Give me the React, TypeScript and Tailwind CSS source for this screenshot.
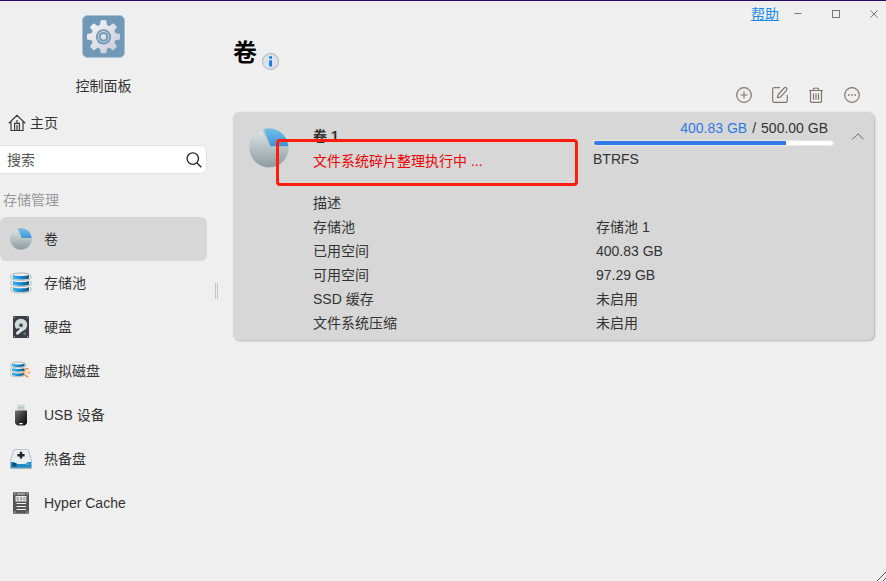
import type { ReactNode } from "react";

function GearIcon() {
  return (
    <svg width="43" height="43" viewBox="0 0 43 43" aria-hidden="true">
      <defs>
        <linearGradient id="gear" x1="0" y1="0" x2="1" y2="1">
          <stop offset="0" stopColor="#fafafc" />
          <stop offset="1" stopColor="#c4c8d6" />
        </linearGradient>
        <mask id="gearShape">
          <g fill="#fff">
            <circle cx="21.5" cy="21.8" r="12.3" />
            {[0, 45, 90, 135].map((angle) => (
              <path
                key={angle}
                d="M18.800 5.300h5.400l1 6v21l-1 6h-5.400l-1-6v-21z"
                transform={`rotate(${angle} 21.5 21.8)`}
              />
            ))}
          </g>
          <circle cx="21.5" cy="21.8" r="7.6" />
          <circle cx="21.5" cy="21.8" r="5.700" fill="#fff" />
          <circle cx="21.5" cy="21.8" r="4.900" />
          <circle cx="21.5" cy="21.8" r="2.800" fill="#fff" />
        </mask>
      </defs>
      <rect x="0.5" y="0.5" width="42" height="42" rx="5" fill="#7298b8" stroke="#a9bfd2" />
      <rect x="4" y="4" width="35" height="35" fill="url(#gear)" mask="url(#gearShape)" />
    </svg>
  );
}

function HomeIcon() {
  return (
    <svg width="18" height="18" viewBox="0 0 18 18" fill="none" stroke="#3c3c3c" strokeWidth="1.2" aria-hidden="true">
      <path d="M0.8 9.2L9 1.4l8.2 7.8M3 7.6v8.9h12V7.6M6.6 16.5V9.3h4.8v7.2M9 6v3.3M9 11v5.5" />
    </svg>
  );
}

function PieIcon({ size, id }: { size: number; id: string }) {
  return (
    <svg width={size} height={size} viewBox="0 0 40 40" className="shrink-0" aria-hidden="true">
      <defs>
        <linearGradient id={id + "g"} x1="0" y1="0" x2="0" y2="1">
          <stop offset="0" stopColor="#dce6e7" />
          <stop offset="1" stopColor="#8e9b9f" />
        </linearGradient>
        <linearGradient id={id + "b"} x1="0" y1="0" x2="0" y2="1">
          <stop offset="0" stopColor="#70c0ea" />
          <stop offset="1" stopColor="#3f93d5" />
        </linearGradient>
      </defs>
      <circle cx="20" cy="20" r="19.7" fill="#bcc7ca" />
      <path d="M20.5 19.8L13.3 1.8A19.3 19.3 0 1 0 39.3 19.8z" fill={`url(#${id}g)`} />
      <path d="M21.5 18.3L15 1.2a19.3 19.3 0 0 1 24.3 17.1z" fill={`url(#${id}b)`} />
    </svg>
  );
}

function PoolIcon() {
  return (
    <svg width="22" height="22" viewBox="0 0 22 22" aria-hidden="true">
      <defs>
        <linearGradient id="pool" x1="0" y1="0" x2="1" y2="0">
          <stop offset="0" stopColor="#35b4f0" />
          <stop offset="0.4" stopColor="#1b95dc" />
          <stop offset="1" stopColor="#0c5786" />
        </linearGradient>
      </defs>
      <path d="M2.500 2.500C5 .5 17 .5 19.500 2.500" fill="none" stroke="#aaa9ad" />
      <path d="M3 3c4 1.300 12 1.300 16 0v3.400c-4 1.500-12 1.500-16 0z" fill="url(#pool)" />
      <path d="M3 9c4 1.600 12 1.600 16 0v3.700c-4 1.500-12 1.500-16 0z" fill="url(#pool)" />
      <path d="M3 15.200c4 1.600 12 1.600 16 0v3.700c-4 1.500-12 1.500-16 0z" fill="url(#pool)" />
      <path
        d="M1.800 2.500C.4 4 .4 6 1.800 7c3.500 1.700 14.900 1.700 18.400 0 1.400-1 1.400-3 0-4.500M1.800 8.700c-1.400 1.300-1.400 3.300 0 4.500 3.500 1.700 14.900 1.700 18.400 0 1.400-1.200 1.400-3.200 0-4.500M1.800 15c-1.400 1.300-1.400 3.300 0 4.500 3.500 1.900 14.900 1.900 18.400 0 1.400-1.200 1.400-3.200 0-4.500"
        fill="none"
        stroke="#b3aeae"
        strokeWidth="0.900"
      />
    </svg>
  );
}

function DiskIcon() {
  return (
    <svg width="22" height="22" viewBox="0 0 22 22" aria-hidden="true">
      <rect x="3" y="0" width="16" height="22" rx="1" fill="#3b3c46" />
      <g fill="#a5a7ad">
        <circle cx="4.500" cy="1.500" r="0.700" />
        <circle cx="17.500" cy="1.500" r="0.700" />
        <circle cx="4.500" cy="20.500" r="0.700" />
        <circle cx="17.500" cy="20.500" r="0.700" />
      </g>
      <circle cx="11" cy="9" r="6.200" fill="#cfdbdb" />
      <path d="M4.500 14.500l5-1.500" stroke="#3b3c46" strokeWidth="2" />
      <path d="M7.500 17.200l4.500-3.700" stroke="#dce6e5" strokeWidth="3" strokeLinecap="round" />
      <path d="M9.800 18.500l4.500-4" stroke="#3b3c46" strokeWidth="0.900" />
      <circle cx="11" cy="9.300" r="2.200" fill="#8b9a9c" />
      <circle cx="11" cy="9.300" r="1.400" fill="#2f3a40" />
      <rect x="13.500" y="16.500" width="2.500" height="2.500" fill="#4e8272" />
    </svg>
  );
}

function VirtualDiskIcon() {
  return (
    <svg width="22" height="22" viewBox="0 0 22 22" aria-hidden="true">
      <path d="M2 3.500C4 1.500 13 1.500 15 3.500" fill="none" stroke="#a6a6ac" strokeWidth="0.800" />
      <path d="M2 3.700c3 1 9.500 1 12.500 0v2.500c-3 1.100-9.500 1.100-12.500 0zM2 8.300c3 1 9.500 1 12.500 0v2.500c-3 1.100-9.500 1.100-12.500 0zM2 12.800c3 1 9.500 1 12.500 0v2.500c-3 1.100-9.500 1.100-12.500 0z" fill="url(#pool)" />
      <path
        d="M1.200 3.500c-1 1-1 2.500 0 3.200 2.500 1.300 11.600 1.300 14.100 0 1-.7 1-2.200 0-3.200M1.200 8.100c-1 1-1 2.500 0 3.200 2.500 1.300 11.600 1.300 14.100 0M1.200 12.600c-1 1-1 2.500 0 3.200 2.500 1.300 9.600 1.300 12.800 0"
        fill="none"
        stroke="#b3aeae"
        strokeWidth="0.800"
      />
      <path d="M18.500 7.800L12.200 12.300l6.300 5z" fill="#efefef" />
      <path d="M18.500 8.700h-2l-3.300 3.900 3.300 3.900h2" fill="none" stroke="#f0923c" strokeWidth="1.400" />
      <path d="M16 12.600h5M19 10.500v4.200" stroke="#f7b679" strokeWidth="1" />
    </svg>
  );
}

function UsbIcon() {
  return (
    <svg width="22" height="22" viewBox="0 0 22 22" aria-hidden="true">
      <defs>
        <linearGradient id="usb" x1="0" y1="0" x2="1" y2="1">
          <stop offset="0" stopColor="#777" />
          <stop offset="0.600" stopColor="#2c2c2c" />
          <stop offset="1" stopColor="#050505" />
        </linearGradient>
      </defs>
      <rect x="7" y="0.500" width="8" height="7" rx="1" fill="#d0dade" />
      <path d="M8.700 3h1.600v1.500H8.700zM11.700 3h1.600v1.500h-1.600z" fill="#9eabb2" />
      <path d="M5 6.500h12v12c0 1.500-2 3-3 3H8c-1 0-3-1.500-3-3z" fill="url(#usb)" />
      <rect x="9.200" y="19" width="3.600" height="1.200" rx="0.500" fill="#fff" />
    </svg>
  );
}

function SpareIcon() {
  return (
    <svg width="22" height="22" viewBox="0 0 22 22" aria-hidden="true">
      <path d="M5 1.500h12l1.500 1L21.600 13v7.500H.4V13L3.500 2.500z" fill="#e9eef0" stroke="#a5b6be" strokeWidth="0.800" />
      <path d="M.8 14h3.700c.8 1.500 2 2 3.500 2h6c1.500 0 2.700-.5 3.500-2h3.700v6H.8z" fill="#1f8bc6" />
      <path d="M.8 20h20.400" stroke="#8aa8b5" />
      <rect x="2.500" y="15" width="4" height="3.500" fill="#0c4b70" />
      <path d="M15.500 16h4" stroke="#63c3ee" />
      <path d="M11 3.800v6.800M7.400 7.200h7.200" stroke="#23252e" strokeWidth="2.400" />
    </svg>
  );
}

function CacheIcon() {
  return (
    <svg width="22" height="22" viewBox="0 0 22 22" aria-hidden="true">
      <rect x="3" y="0.300" width="16" height="21.500" rx="0.800" fill="#555" />
      <rect x="5.500" y="4" width="11" height="5.500" fill="#e8e8e8" />
      <path d="M8.500 5.500H6.800v1.200h1.700V8H6.500M12 5.500h-1.700v1.200H12V8h-2M13.800 5.500h1.500L16 6.800 15.300 8h-1.500z" fill="none" stroke="#777" strokeWidth="0.600" />
      <path d="M6.500 11.500h9.500M6.500 14.500h9.500M6.500 17.500h9.500" stroke="#ededed" />
      <path d="M4 2h1.500M16.500 2H18M4 20h1.500M16.500 20H18M7 2h8" stroke="#ddd" />
    </svg>
  );
}

function IconButton({ label, children }: { label: string; children: ReactNode }) {
  return (
    <button type="button" aria-label={label} className="flex h-6 w-6 items-center justify-center">
      <svg width="18" height="18" viewBox="0 0 18 18" fill="none" stroke="#7d7872" strokeWidth="1.200">
        {children}
      </svg>
    </button>
  );
}

const navItems = [
  { name: "卷", icon: <PieIcon size={22} id="nav" />, active: true },
  { name: "存储池", icon: <PoolIcon /> },
  { name: "硬盘", icon: <DiskIcon /> },
  { name: "虚拟磁盘", icon: <VirtualDiskIcon /> },
  { name: "USB 设备", icon: <UsbIcon /> },
  { name: "热备盘", icon: <SpareIcon /> },
  { name: "Hyper Cache", icon: <CacheIcon /> },
];

const details = [
  ["描述", ""],
  ["存储池", "存储池 1"],
  ["已用空间", "400.83 GB"],
  ["可用空间", "97.29 GB"],
  ["SSD 缓存", "未启用"],
  ["文件系统压缩", "未启用"],
];

const used = 400.83;
const total = 500;

function Sidebar() {
  return (
    <aside className="w-[207px] shrink-0">
      <div className="flex flex-col items-center pt-3.5">
        <GearIcon />
        <span className="mt-4 leading-6">控制面板</span>
      </div>
      <a href="#home" className="mt-[13px] flex items-center gap-1 pl-2 leading-6">
        <HomeIcon />
        主页
      </a>
      <div className="mt-2.5 flex h-[29px] items-center rounded-r-md border border-l-0 border-[#e4e4e4] bg-white pr-1">
        <input
          type="text"
          aria-label="搜索"
          placeholder="搜索"
          className="min-w-0 flex-1 bg-transparent pl-[7px] outline-none placeholder:text-[#555]"
        />
        <button type="button" aria-label="搜索" className="flex h-4 w-4 items-center justify-center">
          <svg width="16" height="16" viewBox="0 0 16 16" fill="none" stroke="#222" strokeWidth="1.300">
            <circle cx="6.800" cy="6.600" r="5.700" />
            <path d="M10.800 10.800l4.500 4.400" />
          </svg>
        </button>
      </div>
      <h2 className="mt-3.5 pl-[3px] leading-6 text-[#999]">存储管理</h2>
      <nav className="mt-[5px] flex flex-col">
        {navItems.map((item) => (
          <a
            key={item.name}
            href="#nav"
            className={
              item.active
                ? "flex h-11 items-center gap-3 rounded-md bg-[#d7d7d7] pl-2.5"
                : "flex h-11 items-center gap-3 pl-2.5"
            }
          >
            {item.icon}
            {item.name}
          </a>
        ))}
      </nav>
    </aside>
  );
}

function WindowBar() {
  return (
    <div className="flex h-[26px] items-center justify-end">
      <a href="#help" className="mr-[7px] text-[#1a8cf0] underline">
        帮助
      </a>
      <div className="flex gap-3.5">
        <button type="button" aria-label="最小化" className="flex h-6 w-6 items-center justify-center">
          <svg width="8" height="8" viewBox="0 0 8 8" stroke="#777">
            <path d="M0.500 3.500h7" />
          </svg>
        </button>
        <button type="button" aria-label="最大化" className="flex h-6 w-6 items-center justify-center">
          <svg width="8" height="8" viewBox="0 0 8 8" fill="none" stroke="#777">
            <rect x="0.500" y="0.500" width="7" height="7" />
          </svg>
        </button>
        <button type="button" aria-label="关闭" className="flex h-6 w-6 items-center justify-center">
          <svg width="8" height="8" viewBox="0 0 8 8" stroke="#777">
            <path d="M0.500 0.500l7 7M7.500 0.500l-7 7" />
          </svg>
        </button>
      </div>
    </div>
  );
}

function VolumeCard() {
  return (
    <section className="relative rounded-md bg-[#d7d7d7] pt-1 pb-[5px] shadow-[1px_1px_2px_#b4b4b4]">
      <div className="flex">
        <div className="w-20 shrink-0 pt-3 pl-4">
          <PieIcon size={40} id="card" />
        </div>
        <div className="flex-1 pt-2">
          <h3 className="leading-6 font-bold">卷 1</h3>
          <p className="mt-px leading-6 text-[#f00000]">文件系统碎片整理执行中 ...</p>
        </div>
        <div className="w-[241px]">
          <p className="flex justify-end gap-[5px] pr-1.5 leading-6">
            <span className="text-[#2f7ae5]">400.83 GB</span>
            <span>/</span>
            <span>500.00 GB</span>
          </p>
          <div
            role="progressbar"
            aria-label="已用空间"
            aria-valuenow={used}
            aria-valuemax={total}
            className="h-1.5 rounded-full border border-[#e6e6e6] bg-white"
          >
            <div className="h-full rounded-l-full bg-[#2f7ae5]" style={{ width: `${(used / total) * 100}%` }} />
          </div>
          <p className="mt-px leading-6">BTRFS</p>
        </div>
        <div className="flex w-10 justify-end pt-2 pr-2.5">
          <button type="button" aria-label="收起" className="flex h-6 w-3 items-center justify-center">
            <svg width="12" height="7" viewBox="0 0 12 7" fill="none" stroke="#666">
              <path d="M0.500 6.300L6 0.800l5.500 5.500" />
            </svg>
          </button>
        </div>
      </div>
      <table className="mt-[18px] w-full table-fixed">
        <tbody>
          {details.map(([label, value]) => (
            <tr key={label} className="h-6">
              <th scope="row" className="p-0 pl-20 text-left leading-6 font-normal">
                {label}
              </th>
              <td className="w-[278px] p-0 leading-6">{value}</td>
            </tr>
          ))}
        </tbody>
      </table>
      {/* highlight around the running task */}
      <div className="pointer-events-none absolute top-[27px] right-[296px] left-[43px] h-[47px] rounded-sm border-3 border-[#ff1e0e]" />
    </section>
  );
}

export default function App() {
  return (
    <div
      lang="zh-CN"
      className="relative flex min-h-screen overflow-hidden border-t border-[#2a0a66] bg-[#efefef] font-['Liberation_Sans','Noto_Sans_CJK_SC',sans-serif] text-sm text-[#333]"
    >
      <Sidebar />
      <div className="flex w-[26px] shrink-0 items-center pl-2">
        <div className="h-4 w-[3px] border-x border-[#c4c4c4]" />
      </div>
      <main className="min-w-0 flex-1">
        <WindowBar />
        <div className="pr-3">
          <div className="flex h-[52px] items-center gap-[5px]">
            <h1 className="text-2xl font-bold text-black">卷</h1>
            <button type="button" aria-label="信息" className="mt-4">
              <svg width="17" height="17" viewBox="0 0 17 17">
                <circle cx="8.500" cy="8.500" r="8" fill="#dde3ea" stroke="#a9b0b8" />
                <path d="M7.200 3.300h2.800v2.500H7.200zM7.200 7.200h2.800v6.300H7.200z" fill="#0f7bfa" />
              </svg>
            </button>
          </div>
          <div className="mb-px flex h-8 items-center justify-end gap-3 pr-2.5">
            <IconButton label="新增">
              <circle cx="9" cy="9" r="7.300" />
              <path d="M5.500 9h7M9 5.500v7" />
            </IconButton>
            <IconButton label="编辑">
              <path d="M9 1.700H3.200a1.500 1.500 0 0 0-1.500 1.500v11.600a1.500 1.500 0 0 0 1.500 1.500h11.600a1.500 1.500 0 0 0 1.500-1.500V9" />
              <path d="M6.500 11.700l.7-3.200 6-6.500a1.600 1.600 0 0 1 2.300 2.300l-6 6.700z" />
            </IconButton>
            <IconButton label="删除">
              <path d="M2 4.500h14M6 4.500C6 2.700 7 2 9 2s3 .7 3 2.500M3.500 4.500v10.800a1 1 0 0 0 1 1h9a1 1 0 0 0 1-1V4.500M6.500 7.500v6.300M9 7.500v6.300M11.500 7.500v6.300" />
            </IconButton>
            <IconButton label="更多">
              <circle cx="9" cy="9" r="7.300" />
              <path d="M5 9h1.600M8.200 9h1.600M11.400 9H13" strokeWidth="1.600" />
            </IconButton>
          </div>
          <VolumeCard />
        </div>
      </main>
      <svg width="10" height="10" viewBox="0 0 10 10" className="absolute right-0 bottom-0" stroke="#555" aria-hidden="true">
        <path d="M1 10l9-9M7 10l3-3" />
      </svg>
    </div>
  );
}
